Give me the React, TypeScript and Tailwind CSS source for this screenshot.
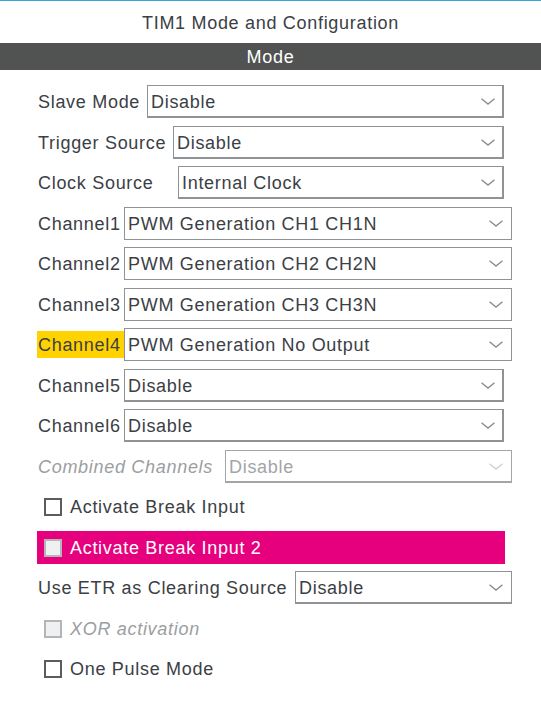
import React from "react";

const FONT = "font-[family-name:'Liberation_Sans',Arial,sans-serif]";

function Chevron({ disabled }: { disabled?: boolean }) {
  return (
    <svg width="14" height="7" viewBox="0 0 14 7" className="shrink-0">
      <path
        d="M0.5 0.8 L7 6 L13.5 0.8"
        fill="none"
        stroke={disabled ? "#cfd1d3" : "#8a8c8e"}
        strokeWidth="1.4"
      />
    </svg>
  );
}

function Select({
  text,
  width,
  thick,
  disabled,
}: {
  text: string;
  width: string;
  thick?: boolean;
  disabled?: boolean;
}) {
  return (
    <div
      className={`${width} h-[33px] flex items-center justify-between bg-white pl-[3px] ${
        thick
          ? "border-t border-l border-r-2 border-b-2 border-[#8f9396] pr-[7px]"
          : disabled
          ? "border border-b-2 border-[#a3a6a9] pr-[8px]"
          : "border border-[#8f9396] pr-[8px]"
      }`}
    >
      <span className={`pt-[1px] ${disabled ? "text-[#a2a5a8]" : "text-[#3b4045]"}`}>{text}</span>
      <Chevron disabled={disabled} />
    </div>
  );
}

function Row({
  label,
  labelW,
  selW,
  text,
  thick,
  disabled,
  highlight,
  mt,
}: {
  label: string;
  labelW: string;
  selW: string;
  text: string;
  thick?: boolean;
  disabled?: boolean;
  highlight?: boolean;
  mt: string;
}) {
  return (
    <div className={`flex items-center h-[33px] ${mt}`}>
      <div className={`${labelW} shrink-0 flex items-center`}>
        {highlight ? (
          <span className="bg-[#ffd200] h-[27px] w-full flex items-center pl-[1px] pt-[1px] text-[#3b4045] whitespace-nowrap">
            {label}
          </span>
        ) : (
          <span
            className={`whitespace-nowrap pl-[1px] pt-[1px] ${
              disabled ? "italic text-[#9b9ea1]" : "text-[#3b4045]"
            }`}
          >
            {label}
          </span>
        )}
      </div>
      <Select text={text} width={selW} thick={thick} disabled={disabled} />
    </div>
  );
}

function Check({
  label,
  disabled,
  pink,
  italic,
  mt,
}: {
  label: string;
  disabled?: boolean;
  pink?: boolean;
  italic?: boolean;
  mt: string;
}) {
  return (
    <div
      className={`flex items-center h-[33px] w-[468px] ${mt} ${pink ? "bg-[#e6007e]" : ""}`}
    >
      <div
        className={`ml-[7px] w-[18px] h-[18px] shrink-0 ${
          disabled
            ? "bg-[#eef0f2] border-2 border-[#b3b5b7]"
            : "bg-white border-2 border-[#5c5c5c]"
        }`}
      />
      <span
        className={`ml-[8px] pt-[1px] whitespace-nowrap ${
          pink ? "text-white" : italic ? "italic text-[#9b9ea1]" : "text-[#3b4045]"
        }`}
      >
        {label}
      </span>
    </div>
  );
}

export default function App() {
  return (
    <div
      className={`w-[541px] h-[726px] bg-white ${FONT} text-[18px] tracking-[0.7px] leading-none overflow-hidden`}
    >
      <div className="h-[1px] bg-[#3aa3dc]" />
      <div className="h-[42px] flex items-center justify-center pt-[2px] text-[#3b4045]">
        TIM1 Mode and Configuration
      </div>
      <div className="h-[27px] bg-[#515352] flex items-center justify-center pt-[1px] text-white">
        Mode
      </div>
      <div className="flex flex-col pl-[37px] pt-[15px]">
        <Row mt="mt-0" label="Slave Mode" labelW="w-[110px]" selW="w-[357px]" text="Disable" thick />
        <Row mt="mt-[8px]" label="Trigger Source" labelW="w-[136px]" selW="w-[331px]" text="Disable" thick />
        <Row mt="mt-[7px]" label="Clock Source" labelW="w-[141px]" selW="w-[326px]" text="Internal Clock" thick />
        <Row mt="mt-[8px]" label="Channel1" labelW="w-[87px]" selW="w-[388px]" text="PWM Generation CH1 CH1N" />
        <Row mt="mt-[7px]" label="Channel2" labelW="w-[87px]" selW="w-[388px]" text="PWM Generation CH2 CH2N" />
        <Row mt="mt-[8px]" label="Channel3" labelW="w-[87px]" selW="w-[388px]" text="PWM Generation CH3 CH3N" />
        <Row mt="mt-[7px]" label="Channel4" labelW="w-[87px]" selW="w-[388px]" text="PWM Generation No Output" highlight />
        <Row mt="mt-[8px]" label="Channel5" labelW="w-[87px]" selW="w-[380px]" text="Disable" thick />
        <Row mt="mt-[7px]" label="Channel6" labelW="w-[87px]" selW="w-[380px]" text="Disable" thick />
        <Row mt="mt-[8px]" label="Combined Channels" labelW="w-[188px]" selW="w-[287px]" text="Disable" disabled />
        <Check mt="mt-[7px]" label="Activate Break Input" />
        <Check mt="mt-[8px]" label="Activate Break Input 2" pink disabled />
        <div className="flex items-center h-[33px] mt-[7px]">
          <div className="w-[258px] shrink-0 pl-[1px] pt-[1px] whitespace-nowrap text-[#3b4045]">
            Use ETR as Clearing Source
          </div>
          <div className="w-[217px] h-[33px] flex items-center justify-between bg-white pl-[3px] pr-[8px] border border-b-2 border-[#8f9396]">
            <span className="pt-[1px] text-[#3b4045]">Disable</span>
            <Chevron />
          </div>
        </div>
        <Check mt="mt-[8px]" label="XOR activation" disabled italic />
        <Check mt="mt-[7px]" label="One Pulse Mode" />
      </div>
    </div>
  );
}
